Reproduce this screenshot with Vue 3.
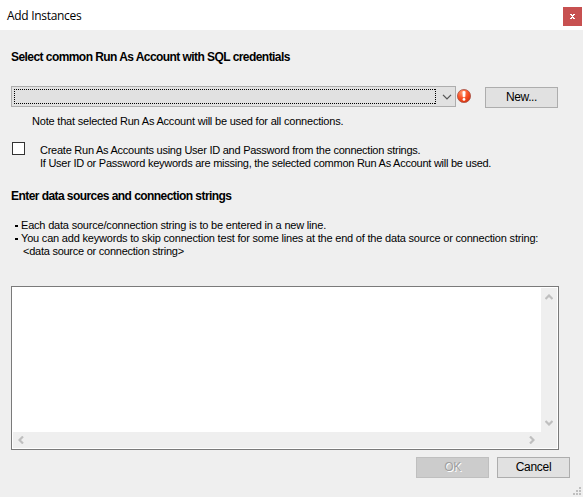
<script setup>
import { ref } from 'vue'

const useStrings = ref(false)
const dataSources = ref('')
const gripDots = [[6, 0], [3, 3], [6, 3], [0, 6], [3, 6], [6, 6]]
</script>

<template>
  <div class="dialog">
    <header class="titlebar">
      <span class="title">Add Instances</span>
      <button class="close" aria-label="Close">
        <svg width="19" height="19" viewBox="0 0 19 19" shape-rendering="crispEdges">
          <path d="M7 7h2v1h1v-1h2v1h-1v1h-1v1h1v1h1v1h-2v-1h-1v1h-2v-1h1v-1h1v-1h-1v-1h-1zM8 8h3v1h-3zM8 10h3v1h-3z" fill="#fff" />
        </svg>
      </button>
    </header>

    <main class="content">
      <h2 class="heading"><span>Select common Run As Account with SQL credentials</span></h2>

      <div class="account-row">
        <div class="combo" role="combobox" tabindex="0">
          <svg class="focus" width="422" height="15" shape-rendering="crispEdges">
            <path d="M0 .5H422M0 14.5H422M.5 0V15M421.5 0V15" fill="none" stroke="#000" stroke-dasharray="1 1" />
          </svg>
          <svg class="chevron" width="10" height="6" viewBox="0 0 10 6">
            <path d="M1 .9L5 4.9L9 .9" fill="none" stroke="#555" stroke-width="1.3" />
          </svg>
        </div>
        <svg class="error" width="16" height="16" viewBox="0 0 16 16">
          <defs>
            <radialGradient id="errorFill" cx="38%" cy="25%" r="80%">
              <stop offset="0" stop-color="#ff9a70" />
              <stop offset=".5" stop-color="#fa5426" />
              <stop offset="1" stop-color="#d6300c" />
            </radialGradient>
          </defs>
          <circle cx="8" cy="8" r="6.6" fill="url(#errorFill)" stroke="#a8564a" stroke-width=".8" />
          <path d="M6.9 3.6h2.2l-.2 5.2h-1.8z" fill="#fff" stroke="#fff" stroke-width=".8" />
          <circle cx="8" cy="11.4" r="1.4" fill="#fff" />
        </svg>
        <button class="button"><span>New...</span></button>
      </div>

      <p class="note">Note that selected Run As Account will be used for all connections.</p>

      <label class="option">
        <input v-model="useStrings" class="checkbox" type="checkbox">
        <span class="option-text">
          <span>Create Run As Accounts using User ID and Password from the connection strings.</span>
          <span>If User ID or Password keywords are missing, the selected common Run As Account will be used.</span>
        </span>
      </label>

      <h2 class="heading second"><span>Enter data sources and connection strings</span></h2>

      <ul class="hints">
        <li><i class="dot"></i><span>Each data source/connection string is to be entered in a new line.</span></li>
        <li><i class="dot"></i><span>You can add keywords to skip connection test for some lines at the end of the data source or connection string:</span></li>
        <li class="syntax"><span>&lt;data source or connection string&gt;</span></li>
      </ul>

      <div class="editor">
        <textarea v-model="dataSources" class="input" aria-label="Data sources"></textarea>
        <div class="vbar">
          <svg width="8" height="6" viewBox="0 0 8 6"><path d="M.5 5L4 1.5L7.5 5" /></svg>
          <svg width="8" height="6" viewBox="0 0 8 6"><path d="M.5 1L4 4.5L7.5 1" /></svg>
        </div>
        <div class="hbar">
          <svg width="6" height="8" viewBox="0 0 6 8"><path d="M5 .5L1.5 4L5 7.5" /></svg>
          <svg width="6" height="8" viewBox="0 0 6 8"><path d="M1 .5L4.5 4L1 7.5" /></svg>
        </div>
      </div>

      <footer class="actions">
        <button class="button" disabled><span>OK</span></button>
        <button class="button"><span>Cancel</span></button>
      </footer>
    </main>

    <svg class="grip" width="8" height="8" shape-rendering="crispEdges">
      <rect v-for="([x, y], i) in gripDots" :key="i" :x="x" :y="y" width="2" height="2" fill="#bfbfbf" />
    </svg>
  </div>
</template>

<style>
body {
  margin: 0;
  overflow: hidden;
}
</style>

<style scoped>
.dialog {
  position: relative;
  box-sizing: border-box;
  width: 583px;
  height: 497px;
  background: #efefef;
  color: #000;
  font: 11px/13px "Liberation Sans", Arial, sans-serif;
  overflow: hidden;
}
.titlebar {
  display: flex;
  box-sizing: border-box;
  height: 30px;
  padding: 7px 1px 0 7px;
  justify-content: space-between;
  background: #fff;
}
.title {
  font: 12px/18px "Open Sans", "Noto Sans", sans-serif;
  letter-spacing: -0.3px;
}
.close {
  display: block;
  width: 19px;
  height: 19px;
  padding: 0;
  border: 0;
  background: #c75050;
}
.close svg { display: block; }
.content { padding: 20px 0 0 11px; }
.heading {
  margin: 0;
  height: 14px;
  font-size: 12px;
  line-height: 14px;
  font-weight: bold;
  letter-spacing: -0.56px;
  white-space: nowrap;
}
.account-row {
  display: flex;
  margin-top: 22px;
  height: 22px;
}
.combo {
  display: flex;
  box-sizing: border-box;
  width: 445px;
  height: 21px;
  padding: 0 3px 0 2px;
  align-items: center;
  justify-content: space-between;
  border: 1px solid #adadad;
  background: #e1e1e1;
}
.error { margin: 2px 0 0; }
.account-row .button { margin: 1px 0 0 13px; }
.button {
  box-sizing: border-box;
  width: 73px;
  height: 21px;
  padding: 0;
  border: 1px solid #adadad;
  background: #e1e1e1;
  color: #000;
  font: 12px/19px "Liberation Sans", Arial, sans-serif;
  letter-spacing: -0.3px;
}
.account-row .button { letter-spacing: -0.4px; }
.button:disabled {
  border-color: #bfbfbf;
  background: #ccc;
  color: #a0a0a0;
  text-shadow: 1px 1px #fff;
}
.note {
  margin: 7px 0 0 21px;
  letter-spacing: -0.2px;
  white-space: nowrap;
}
.option {
  display: flex;
  margin-top: 14px;
  height: 28px;
}
.checkbox {
  appearance: none;
  box-sizing: border-box;
  width: 13px;
  height: 13px;
  margin: 0 15px 0 1px;
  border: 1px solid #333;
  background: #fff;
}
.option-text {
  display: flex;
  flex-direction: column;
  align-items: flex-start;
  padding-top: 2px;
  letter-spacing: -0.25px;
  white-space: nowrap;
}
.second { margin-top: 19px; }
.hints {
  margin: 16px 0 0;
  padding: 0;
  list-style: none;
}
.hints li {
  display: flex;
  height: 13px;
  padding-left: 4px;
  align-items: center;
  letter-spacing: -0.196px;
  white-space: nowrap;
}
.hints .syntax {
  padding-left: 12px;
  letter-spacing: -0.25px;
}
.dot {
  width: 3px;
  height: 2px;
  margin-right: 3px;
  background: #000;
}
.editor {
  display: grid;
  box-sizing: border-box;
  width: 548px;
  height: 164px;
  margin-top: 28px;
  padding: 1px;
  grid-template: 144px 16px / 528px 16px;
  border: 1px solid #7a7a7a;
  background: #fff;
}
.input {
  box-sizing: border-box;
  width: 100%;
  height: 100%;
  padding: 2px;
  border: 0;
  outline: 0;
  resize: none;
  background: #fff;
}
.vbar, .hbar {
  display: flex;
  box-sizing: border-box;
  align-items: center;
  justify-content: space-between;
  background: #efefef;
}
.vbar {
  flex-direction: column;
  padding: 6px 1px 6px 0;
}
.hbar {
  grid-column: 1 / 3;
  padding: 0 22px 1px 5px;
}
.vbar path, .hbar path {
  fill: none;
  stroke: #bfbfbf;
  stroke-width: 2.2;
}
.actions {
  display: flex;
  margin: 7px 0 0 405px;
  gap: 8px;
}
.grip {
  position: absolute;
  right: 2px;
  bottom: 2px;
}
</style>
